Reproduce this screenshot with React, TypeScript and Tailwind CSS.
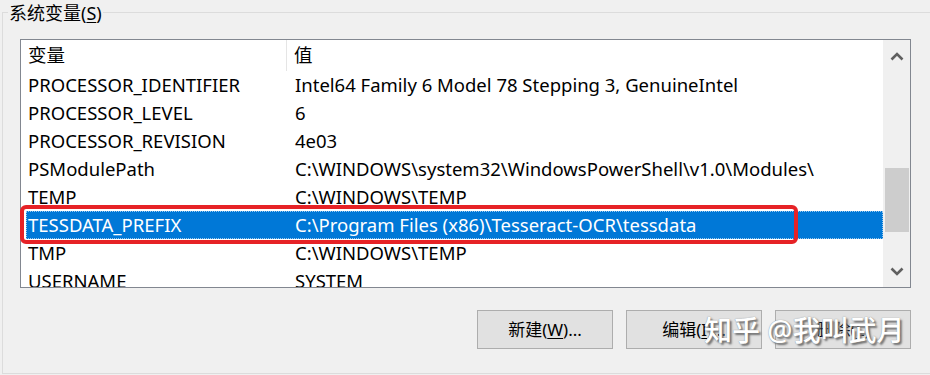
import React from "react";

const rows: [string, string][] = [
  ["PROCESSOR_IDENTIFIER", "Intel64 Family 6 Model 78 Stepping 3, GenuineIntel"],
  ["PROCESSOR_LEVEL", "6"],
  ["PROCESSOR_REVISION", "4e03"],
  ["PSModulePath", "C:\\WINDOWS\\system32\\WindowsPowerShell\\v1.0\\Modules\\"],
  ["TEMP", "C:\\WINDOWS\\TEMP"],
  ["TESSDATA_PREFIX", "C:\\Program Files (x86)\\Tesseract-OCR\\tessdata"],
  ["TMP", "C:\\WINDOWS\\TEMP"],
  ["USERNAME", "SYSTEM"],
];

const font = { fontFamily: '"Noto Sans", "Noto Sans CJK SC", sans-serif' };

function Chevron({ up }: { up: boolean }) {
  return (
    <svg width="14" height="9" viewBox="0 0 14 9">
      <path
        d={up ? "M1.5 7.5 L7 2 L12.5 7.5" : "M1.5 1.5 L7 7 L12.5 1.5"}
        fill="none"
        stroke="#606060"
        strokeWidth="2.6"
      />
    </svg>
  );
}

export default function App() {
  return (
    <div
      className="relative w-[930px] h-[375px] overflow-hidden bg-[#f0f0f0] text-black text-[18.5px] leading-none"
      style={font}
    >
      <div className="pt-[12px] pl-[2px]">
        <div className="relative w-[940px] h-[362px] border-t border-l border-b border-[#dcdcdc]">
          <div className="absolute left-[5px] top-[-12px] h-[24px] px-[1px] bg-[#f0f0f0] flex items-center text-[18px]">
            系统变量(<span className="underline underline-offset-2">S</span>)
          </div>
          <div className="ml-[17px] mt-[26px] w-[891px] h-[249px] border border-[#828790] bg-white flex">
            <div className="flex-1 flex flex-col overflow-hidden">
              <div className="h-[31px] shrink-0 flex items-center">
                <div className="w-[266px] pl-[7px] h-full flex items-center border-r border-[#e5e5e5]">变量</div>
                <div className="pl-[7px]">值</div>
              </div>
              {rows.map(([k, v], i) => {
                const sel = k === "TESSDATA_PREFIX";
                return (
                  <div
                    key={i}
                    className={
                      "h-[28px] shrink-0 ml-[5px] flex items-center " +
                      (sel ? "bg-[#0078d7] text-white outline outline-1 outline-dotted outline-[#99c9ef] -outline-offset-1" : "")
                    }
                  >
                    <div className="w-[269px] pl-[2px] whitespace-nowrap">{k}</div>
                    <div className="whitespace-nowrap">{v}</div>
                  </div>
                );
              })}
            </div>
            <div className="w-[27px] shrink-0 bg-[#f0f0f0] flex flex-col items-center">
              <div className="h-[32px] w-full flex items-center justify-center">
                <Chevron up />
              </div>
              <div className="mt-[96px] w-[24px] h-[64px] bg-[#cdcdcd]" />
              <div className="flex-1" />
              <div className="h-[32px] w-full flex items-center justify-center">
                <Chevron up={false} />
              </div>
            </div>
          </div>
          <div className="mt-[22px] pl-[474px] flex gap-[13px]">
            {[
              <>新建(<span className="underline underline-offset-2">W</span>)...</>,
              <>编辑(<span className="underline underline-offset-2">I</span>)...</>,
              <>删除(<span className="underline underline-offset-2">L</span>)</>,
            ].map((c, i) => (
              <div
                key={i}
                className="w-[136px] h-[39px] bg-[#e1e1e1] border border-[#adadad] flex items-center justify-center text-[17px]"
              >
                {c}
              </div>
            ))}
          </div>
        </div>
      </div>
      <div className="absolute left-[20px] top-[205px] w-[778px] h-[39px] border-[4px] border-[#e62226] rounded-[6px]" />
      <div className="absolute left-[704px] top-[316px] text-[28px] font-medium text-white whitespace-nowrap [text-shadow:2px_2px_2px_#707070,0_0_1px_#777]">
        知乎 @我叫武月
      </div>
    </div>
  );
}
